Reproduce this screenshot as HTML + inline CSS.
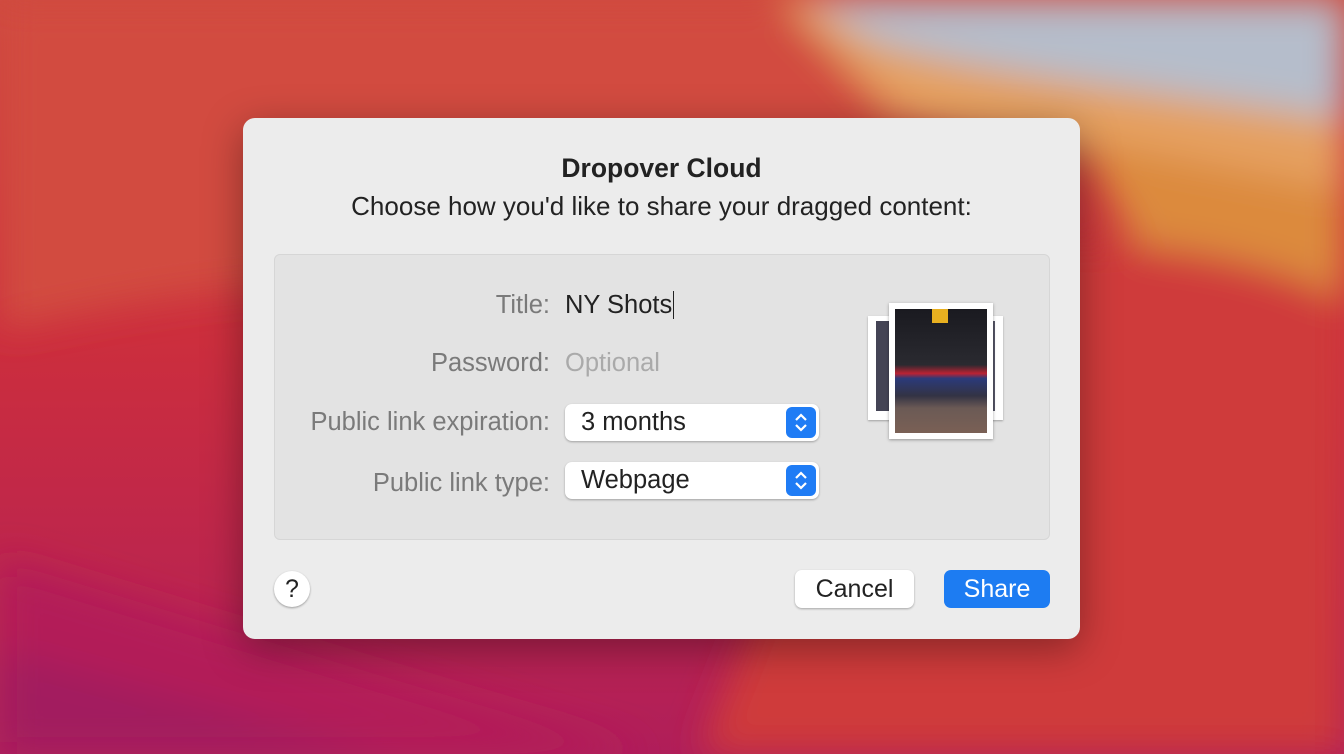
<!DOCTYPE html><html><head><style>
body{margin:0;width:1344px;height:754px;overflow:hidden;position:relative;font-family:"Liberation Sans",sans-serif;}
.bg{position:absolute;inset:0}
.dlg{position:absolute;left:243px;top:118px;width:837px;height:521px;background:#ececec;border-radius:12px;box-shadow:0 10px 40px rgba(0,0,0,.35)}
.t{position:absolute;left:0;width:837px;text-align:center;color:#222}
.box{position:absolute;left:31px;top:136px;width:774px;height:284px;background:#e3e3e3;border:1px solid #d6d6d6;border-radius:6px}
.lbl{position:absolute;right:499px;font-size:25.5px;color:#7a7a7a;white-space:nowrap}
.sel{position:absolute;left:290px;width:254px;height:37px;background:#fff;border-radius:7px;box-shadow:0 1px 2px rgba(0,0,0,.3);font-size:25.5px;color:#222}
.sel span{position:absolute;left:16px;top:4px}
.sel i{position:absolute;right:3px;top:3px;width:30px;height:31px;background:#1f7cf5;border-radius:6px}
.btn{position:absolute;top:452px;height:38px;border-radius:7px;font-size:25px;text-align:center;line-height:38px}
</style></head><body>
<svg class="bg" width="1344" height="754" viewBox="0 0 1344 754">
<defs><filter id="b"><feGaussianBlur stdDeviation="18"/></filter>
<linearGradient id="g0" x1="0" y1="0" x2="0" y2="1"><stop offset="0" stop-color="#cf4a3e"/><stop offset=".45" stop-color="#cc2e3d"/><stop offset="1" stop-color="#b01e5a"/></linearGradient></defs>
<rect width="1344" height="754" fill="url(#g0)"/>
<g filter="url(#b)">
<path d="M0 0H800C870 60 900 150 950 240L900 320C600 260 300 260 0 330Z" fill="#d24c40"/>
<path d="M780 0H1344V220C1200 170 1000 150 900 120Z" fill="#e5a060"/>
<path d="M810 0H1344V120C1150 90 950 70 870 40Z" fill="#b5bdcb"/>
<path d="M1080 140L1344 190V300L1150 270Z" fill="#dc8a3c"/>
<path d="M900 250C1100 230 1250 250 1344 300V754H700Z" fill="#cf3a3a"/>
<path d="M0 560C200 620 420 690 650 754H0Z" fill="#b31e58"/>
<path d="M0 650C150 690 300 730 400 754H0Z" fill="#a21e5e"/>
</g></svg>
<div class="dlg">
<div class="t" style="top:35px;font-size:26.5px;font-weight:bold">Dropover Cloud</div>
<div class="t" style="top:73px;font-size:26px">Choose how you'd like to share your dragged content:</div>
<div class="box">
<div class="lbl" style="top:36px">Title:</div>
<div style="position:absolute;left:290px;top:36px;font-size:25.5px;color:#222">NY Shots<span style="border-left:1.5px solid #222;margin-left:1px;"> </span></div>
<div class="lbl" style="top:94px">Password:</div>
<div style="position:absolute;left:290px;top:94px;font-size:25.5px;color:#aaa">Optional</div>
<div class="lbl" style="top:153px">Public link expiration:</div>
<div class="sel" style="top:149px"><span>3 months</span><i><svg width="30" height="31"><path d="M10 13L15 8L20 13M10 18L15 23L20 18" fill="none" stroke="#fff" stroke-width="2.2"/></svg></i></div>
<div class="lbl" style="top:214px">Public link type:</div>
<div class="sel" style="top:207px"><span>Webpage</span><i><svg width="30" height="31"><path d="M10 13L15 8L20 13M10 18L15 23L20 18" fill="none" stroke="#fff" stroke-width="2.2"/></svg></i></div>
<div style="position:absolute;left:593px;top:61px;width:22px;height:104px;background:#fff;box-shadow:0 1px 2px rgba(0,0,0,.3)"><div style="margin:5px 0 0 8px;width:13px;height:90px;background:#445"></div></div>
<div style="position:absolute;left:706px;top:61px;width:22px;height:104px;background:#fff;box-shadow:0 1px 2px rgba(0,0,0,.3)"><div style="margin:5px 0 0 2px;width:12px;height:90px;background:#556"></div></div>
<div style="position:absolute;left:614px;top:48px;width:104px;height:136px;background:#fff;box-shadow:0 1px 3px rgba(0,0,0,.35)">
<div style="position:absolute;left:6px;top:6px;width:92px;height:124px;background:linear-gradient(#1a1a20 0%,#2a2a30 45%,#b23 52%,#2b3a7a 56%,#334 70%,#6b5a55 80%,#7a6055 100%)"><div style="position:absolute;left:37px;top:0;width:16px;height:14px;background:#e8b020"></div></div></div>
</div>
<div style="position:absolute;left:31px;top:453px;width:36px;height:36px;border-radius:50%;background:#fff;box-shadow:0 1px 2px rgba(0,0,0,.35);text-align:center;line-height:36px;font-size:25px;color:#222">?</div>
<div class="btn" style="left:552px;width:119px;background:#fff;color:#222;box-shadow:0 1px 2px rgba(0,0,0,.3)">Cancel</div>
<div class="btn" style="left:701px;width:106px;background:#1d7cf2;color:#fff">Share</div>
</div>
</body></html>
